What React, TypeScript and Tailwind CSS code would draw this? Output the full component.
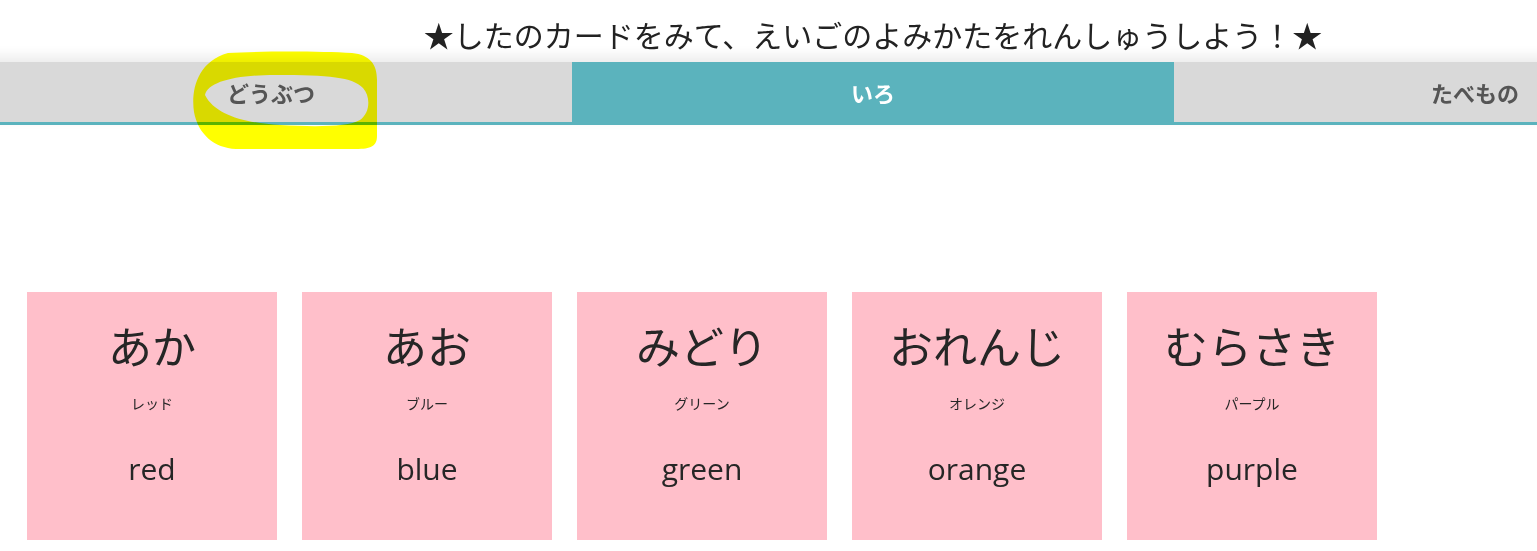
import React from 'react'

const tabs = [
  { label: 'どうぶつ', active: false },
  { label: 'いろ', active: true },
  { label: 'たべもの', active: false },
]

const cards = [
  { kana: 'あか', kata: 'レッド', en: 'red' },
  { kana: 'あお', kata: 'ブルー', en: 'blue' },
  { kana: 'みどり', kata: 'グリーン', en: 'green' },
  { kana: 'おれんじ', kata: 'オレンジ', en: 'orange' },
  { kana: 'むらさき', kata: 'パープル', en: 'purple' },
]

const jp = { fontFamily: '"Noto Sans CJK JP", "Open Sans", sans-serif' }
const en = { fontFamily: '"Open Sans", "Noto Sans CJK JP", sans-serif' }

function Card({ kana, kata, word }: { kana: string; kata: string; word: string }) {
  return (
    <div className="flex h-[248px] w-[250px] shrink-0 flex-col items-center bg-[#ffbfca] pt-[31px] text-[#262626]">
      <div className="text-[44px] leading-none" style={jp}>{kana}</div>
      <div className="mt-[29px] text-[14px] leading-none" style={jp}>{kata}</div>
      <div className="mt-[44px] text-[30px] leading-none" style={en}>{word}</div>
    </div>
  )
}

export default function App() {
  return (
    <div className="relative h-[551px] w-full overflow-hidden bg-white">
      <div className="-ml-[30px] w-[1806px]">
        <div className="flex h-[62px] items-center justify-center pt-[6px] text-[30px] text-[#222]" style={jp}>
          ★したのカードをみて、えいごのよみかたをれんしゅうしよう！★
        </div>
        <div className="flex border-b-[3px] border-[#5bb3bd] shadow-[0_-6px_12px_rgba(0,0,0,0.08)]">
          {tabs.map((t) => (
            <div
              key={t.label}
              className={
                t.active
                  ? 'flex h-[60px] flex-1 items-center justify-center bg-[#5bb3bd] text-[22px] font-bold text-white'
                  : 'flex h-[60px] flex-1 items-center justify-center bg-[#d9d9d9] text-[22px] font-bold text-[#555]'
              }
              style={jp}
            >
              {t.label}
            </div>
          ))}
        </div>
      </div>

      <div className="mt-[167px] flex gap-[25px] pl-[27px]">
        {cards.map((c) => (
          <Card key={c.en} kana={c.kana} kata={c.kata} word={c.en} />
        ))}
      </div>

      {/* hand-drawn highlight around the first tab */}
      <svg
        className="pointer-events-none absolute left-0 top-0 mix-blend-multiply"
        width="400"
        height="160"
        viewBox="0 0 400 160"
      >
        <path
          fillRule="evenodd"
          fill="#ffff00"
          d="M228 53 C260 51 320 51 352 53 C370 55 377 64 377 80 L377 136 C377 146 371 149 356 149 L236 149 C214 148 198 134 194 112 C191 92 196 62 228 53 Z
             M205 95 C208 82 235 75 275 75 C330 75 352 77 363 88 C371 97 370 113 360 120 C348 127 315 127 280 125 C245 123 215 115 205 95 Z"
        />
      </svg>
    </div>
  )
}
